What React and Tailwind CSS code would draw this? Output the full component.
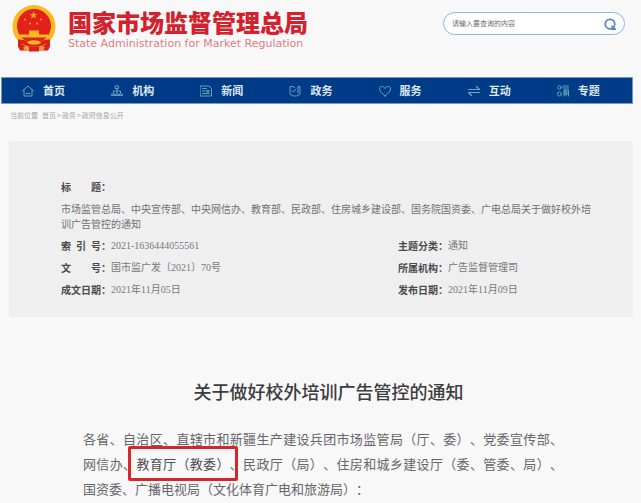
const iconProps = {
  viewBox: '0 0 24 24',
  fill: 'none',
  stroke: 'currentColor',
  strokeWidth: 1.8,
  strokeLinecap: 'round',
  strokeLinejoin: 'round',
  className: 'w-3 h-3 text-[#6fabc0]',
  'aria-hidden': true,
};

const HomeIcon = () => (
  <svg {...iconProps}>
    <path d="M1 12 12 2l11 10M4 10v12h16V10M8 17h8" />
  </svg>
);

const OrgIcon = () => (
  <svg {...iconProps}>
    <path d="M9 2h6v5H9zM12 7v9M5 16v-4h14v4" />
    <path d="M1 18h6v3H1zM9 18h6v3H9zM17 18h6v3h-6z" />
  </svg>
);

const NewsIcon = () => (
  <svg {...iconProps}>
    <path d="M1 2h17l5 5v15H1zM5 7h8M5 12h5M5 17h13M14 11h4v3h-4z" />
  </svg>
);

const AffairsIcon = () => (
  <svg {...iconProps}>
    <path d="M7 3H2v15c2 3 6 4 10 4s8-1 10-4V3h-4v13M7 3l4 2M6 11l3 3 5-6" />
  </svg>
);

const HeartIcon = () => (
  <svg {...iconProps}>
    <path d="M12 22C5 16 1 12 1 8c0-6 8-7 11-1 3-6 11-5 11 1 0 4-4 8-11 14z" />
  </svg>
);

const InteractIcon = () => (
  <svg {...iconProps} strokeWidth={2.2}>
    <path d="M1 9h22l-6-6M23 15H1l6 6" />
  </svg>
);

const TopicIcon = () => (
  <svg {...iconProps}>
    <circle cx="5" cy="5" r="3.5" />
    <circle cx="5" cy="18" r="4" />
    <path d="M12 2h11M12 6h11M14 10h9v12M14 10v12M14 14h9M14 18h9M18 10v12" />
  </svg>
);

const navItems = [
  { label: '首页', Icon: HomeIcon },
  { label: '机构', Icon: OrgIcon },
  { label: '新闻', Icon: NewsIcon },
  { label: '政务', Icon: AffairsIcon },
  { label: '服务', Icon: HeartIcon },
  { label: '互动', Icon: InteractIcon },
  { label: '专题', Icon: TopicIcon },
];

const details = [
  { label: '索引号', value: '2021-1636444055561' },
  { label: '主题分类', value: '通知' },
  { label: '文号', value: '国市监广发〔2021〕70号' },
  { label: '所属机构', value: '广告监督管理司' },
  { label: '成文日期', value: '2021年11月05日' },
  { label: '发布日期', value: '2021年11月09日' },
];

function Emblem() {
  return (
    <svg viewBox="0 0 44 47" className="w-11 h-12" aria-hidden="true">
      <path d="M6 34h32v8l-2 4H8l-2-4z" fill="#d8201c" />
      <circle cx="22" cy="22" r="21.5" fill="#f8bb22" />
      <circle cx="22" cy="21.5" r="17" fill="#e3201b" />
      <path d="M21.500 7l1 2.600h2.800l-2.200 1.700.8 2.700-2.400-1.600-2.400 1.600.8-2.700-2.200-1.700h2.800z" fill="#f8a622" />
      <g fill="#f8a622">
        <circle cx="13" cy="15" r="1" />
        <circle cx="29" cy="15" r="1" />
        <circle cx="18" cy="19" r="1" />
        <circle cx="25" cy="19" r="1" />
      </g>
      <path d="M17 26h10v4h9v3H8v-3h9z" fill="#f8bb22" />
      <path d="M6 35c6 0 9 1 11 4h10c2-3 5-4 11-4v4c-4 0-7 1-9 3H15c-2-2-5-3-9-3z" fill="#d8201c" />
      <path d="M15 38c2-3 12-3 14 0-2 3-12 3-14 0z" fill="#f8bb22" />
      <path d="M11 43l4-2 3 3h8l3-3 4 2-2 3H13z" fill="#f3a03a" />
      <path d="M17 42h10v5H17z" fill="#d8201c" />
    </svg>
  );
}

function Header() {
  return (
    <header className="flex items-start justify-between pt-1 pl-3 pr-2 h-[77px]">
      <div className="flex items-start">
        <Emblem />
        <div className="ml-3 mt-1 text-[#d3222d]">
          <h1 className="text-[24px] leading-[28px] font-black">国家市场监督管理总局</h1>
          <p className="mt-0.5 font-['DejaVu_Sans'] text-[11px] leading-[12px] text-[#df7d83]">
            State Administration for Market Regulation
          </p>
        </div>
      </div>
      <form className="flex items-center mt-2 w-[182px] h-[23px] px-2 rounded-full border border-[#8db6d3] bg-white">
        <input
          type="text"
          aria-label="搜索"
          placeholder="请输入要查询的内容"
          className="flex-1 min-w-0 text-[7px] outline-none placeholder:text-[#6b6b6b]"
        />
        <button type="button" aria-label="查询">
          <svg viewBox="0 0 24 24" fill="none" stroke="#5b84bd" strokeWidth="3.500" className="w-3 h-3">
            <circle cx="12" cy="12" r="9.500" />
            <path d="M15 16l7 6h-8" />
          </svg>
        </button>
      </form>
    </header>
  );
}

function Navbar() {
  return (
    <nav className="grid grid-cols-7 ml-px pr-1.5 h-[27px] bg-[#003b87] border border-[#6f9ccb]">
      {navItems.map(({ label, Icon }) => (
        <a key={label} href="#" className="flex items-center gap-[9px] pl-5 text-[11px] font-bold text-[#dfe8f1]">
          <Icon />
          {label}
        </a>
      ))}
    </nav>
  );
}

function Breadcrumb() {
  return (
    <p className="flex h-[37px] pt-1 pl-[10px] text-[7px] leading-[14px] text-[#a5a5ad]">
      <span className="mr-1">当前位置</span>
      <a href="#">首页</a>
      <span className="mx-px">&gt;</span>
      <a href="#">政务</a>
      <span className="mx-px">&gt;</span>
      <a href="#">政府信息公开</a>
    </p>
  );
}

function DocumentInfo() {
  return (
    <section className="ml-[9px] pt-[38px] pb-5 pl-[52px] pr-10 bg-[#efefef] text-[10px] leading-[15px]">
      <dl>
        <dt className="flex font-bold text-[#4a4a4a]">
          <span className="w-10 [text-align-last:justify]">标题</span>：
        </dt>
        <dd className="mt-[7px] text-[#6f6f74]">
          市场监管总局、中央宣传部、中央网信办、教育部、民政部、住房城乡建设部、国务院国资委、广电总局关于做好校外培训广告管控的通知
        </dd>
      </dl>
      <dl className="grid grid-cols-[337px_1fr] gap-y-[7px] mt-[7px]">
        {details.map(({ label, value }) => (
          <div key={label} className="flex">
            <dt className="flex font-bold text-[#4a4a4a]">
              <span className="w-10 [text-align-last:justify]">{label}</span>：
            </dt>
            <dd className="font-['Liberation_Serif','Noto_Sans_CJK_SC',serif] text-[#77777d]">{value}</dd>
          </div>
        ))}
      </dl>
    </section>
  );
}

function Article() {
  return (
    <article className="pt-[59px]">
      <h2 className="pl-6 text-center text-[18px] leading-[30px] font-medium text-[#3c3c3c]">
        关于做好校外培训广告管控的通知
      </h2>
      <p className="mt-5 pl-[83px] pr-[70px] text-justify text-[13px] leading-[25px] text-[#66666a]">
        各省、自治区、直辖市和新疆生产建设兵团市场监管局（厅、委）、党委宣传部、网信办、
        <span className="relative text-[#4c4c50]">
          教育厅（教委）
          <span className="absolute -inset-x-2 -inset-y-2 border-3 border-[#d6252b] rounded-xs" />
        </span>
        、民政厅（局）、住房和城乡建设厅（委、管委、局）、国资委、广播电视局（文化体育广电和旅游局）：
      </p>
    </article>
  );
}

export default function App() {
  return (
    <div
      lang="zh-CN"
      className="min-h-screen pr-2 bg-[#f8f8f9] font-['Noto_Sans_CJK_SC',sans-serif] [text-spacing-trim:space-all]"
    >
      <Header />
      <Navbar />
      <Breadcrumb />
      <DocumentInfo />
      <Article />
    </div>
  );
}
